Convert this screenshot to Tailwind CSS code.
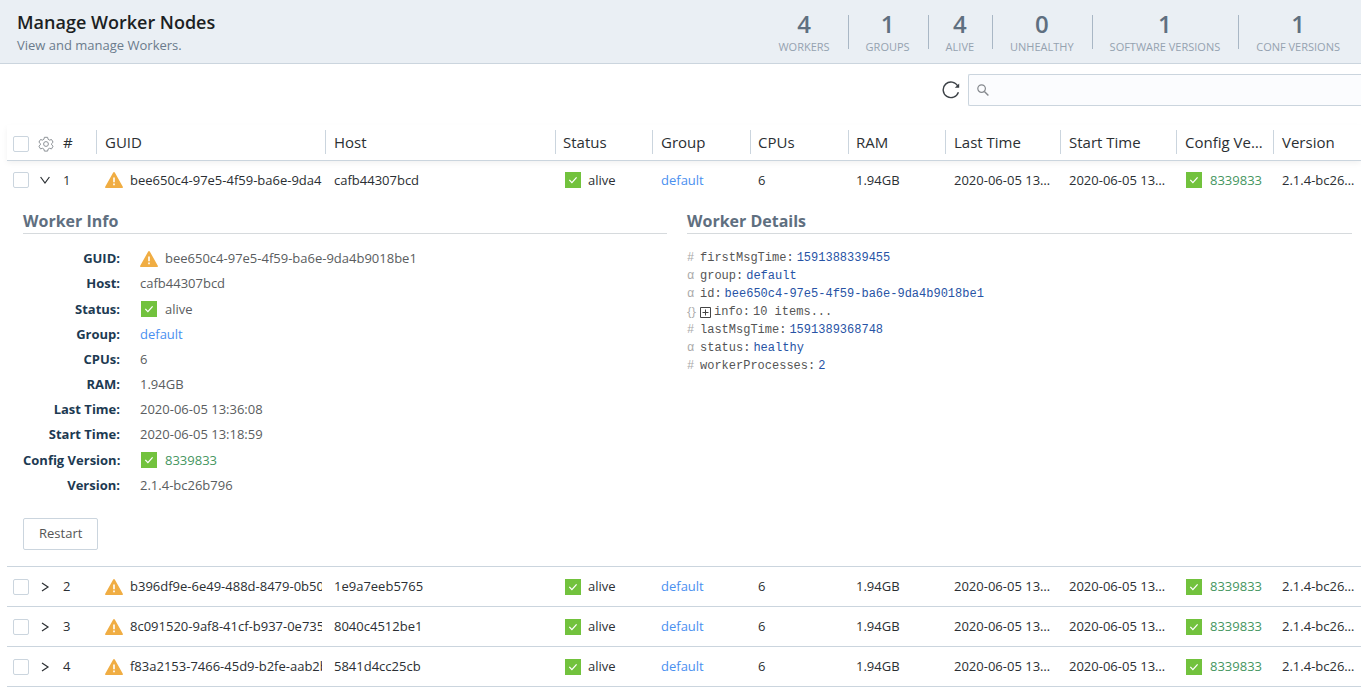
<!DOCTYPE html>
<html lang="en">
<head>
  <meta charset="utf-8"/>
  <meta content="width=device-width, initial-scale=1.0" name="viewport"/>
  <title>Manage Worker Nodes</title>
  <script src="https://cdn.jsdelivr.net/npm/@tailwindcss/browser@4"></script>
</head>
<body class="min-h-screen overflow-x-hidden bg-white font-['Open_Sans',sans-serif] text-[13px] text-[#2b2f33]">
  <!-- Shared icons -->
  <svg class="hidden">
    <symbol id="warning" viewBox="0 0 18 16">
      <path d="M8.2.5a.9.9 0 0 1 1.6 0l8 14.2a.8.8 0 0 1-.7 1.3H.9a.8.8 0 0 1-.7-1.3z" fill="#f0ad43"/>
      <path d="M9 5.6v4.6M9 11.4v1.8" stroke="#fff" stroke-width="1.6" fill="none"/>
    </symbol>
    <symbol id="check" viewBox="0 0 16 16">
      <rect width="16" height="16" fill="#72c23d"/>
      <path d="M4.3 7.9l2.6 2.7 4.7-5.2" stroke="#fff" stroke-width="1.3" fill="none"/>
    </symbol>
    <symbol id="right" viewBox="0 0 10 10">
      <path d="M2 1l6 4-6 4" stroke="#2b2f33" stroke-width="1.2" fill="none"/>
    </symbol>
    <symbol id="down" viewBox="0 0 10 10">
      <path d="M.6 2l4.4 6 4.4-6" stroke="#2b2f33" stroke-width="1.2" fill="none"/>
    </symbol>
  </svg>

  <!-- Page Header -->
  <header class="flex h-16 items-center justify-between border-b border-[#cbd5de] bg-[#eaeff4] pl-[17px] pr-[21px]">
    <div class="pt-0.5">
      <h1 class="text-[18px] leading-6 font-semibold text-[#1c1f23]">Manage Worker Nodes</h1>
      <p class="leading-[22px] text-[#6b7b8c]">View and manage Workers.</p>
    </div>
    <dl class="flex divide-x divide-[#a9b7c5] text-center text-[11px] leading-4 text-[#95a2b0]">
      <div class="flex h-[34px] flex-col-reverse justify-center pr-[18px]">
        <dt>WORKERS</dt>
        <dd class="text-[24px] leading-[30px] font-semibold text-[#5f6f80]">4</dd>
      </div>
      <div class="flex h-[34px] flex-col-reverse justify-center pr-[18px] pl-[17px]">
        <dt>GROUPS</dt>
        <dd class="text-[24px] leading-[30px] font-semibold text-[#5f6f80]">1</dd>
      </div>
      <div class="flex h-[34px] flex-col-reverse justify-center pr-[18px] pl-[17px]">
        <dt>ALIVE</dt>
        <dd class="text-[24px] leading-[30px] font-semibold text-[#5f6f80]">4</dd>
      </div>
      <div class="flex h-[34px] flex-col-reverse justify-center pr-[18px] pl-[17px]">
        <dt>UNHEALTHY</dt>
        <dd class="text-[24px] leading-[30px] font-semibold text-[#5f6f80]">0</dd>
      </div>
      <div class="flex h-[34px] flex-col-reverse justify-center pr-[18px] pl-[17px]">
        <dt>SOFTWARE VERSIONS</dt>
        <dd class="text-[24px] leading-[30px] font-semibold text-[#5f6f80]">1</dd>
      </div>
      <div class="flex h-[34px] flex-col-reverse justify-center pl-[17px]">
        <dt>CONF VERSIONS</dt>
        <dd class="text-[24px] leading-[30px] font-semibold text-[#5f6f80]">1</dd>
      </div>
    </dl>
  </header>

  <!-- Toolbar -->
  <div class="flex items-center justify-end gap-2 pt-[10px] pb-[19px]">
    <button aria-label="Refresh" class="cursor-pointer" type="button">
      <svg class="size-[18px]" fill="none" viewBox="0 0 18 18">
        <path d="M16.4 11.2A7.8 7.8 0 1 1 15.8 5" stroke="#3c4146" stroke-width="1.4"/>
        <path d="M17.2 2.4v4.4h-4.4z" fill="#3c4146"/>
      </svg>
    </button>
    <div class="flex h-8 w-[393px] items-center gap-2 rounded-l-xs border border-r-0 border-[#cbd5de] bg-[#fbfcfe] pl-2">
      <svg class="size-3 shrink-0" fill="none" stroke="#85898e" viewBox="0 0 12 12">
        <circle cx="4.6" cy="4.6" r="3.8" stroke-width="1.2"/>
        <path d="M7.4 7.4l4 4" stroke-width="1.4"/>
      </svg>
      <input aria-label="Search workers" class="h-full w-full outline-none" type="text"/>
    </div>
  </div>

  <!-- Workers Table -->
  <div class="pl-[7px]">
    <table class="w-full table-fixed border-collapse text-left">
      <colgroup>
        <col class="w-[30px]"/>
        <col class="w-[18px]"/>
        <col class="w-[41px]"/>
        <col class="w-[229px]"/>
        <col class="w-[230px]"/>
        <col class="w-[97px]"/>
        <col class="w-[98px]"/>
        <col class="w-[98px]"/>
        <col class="w-[97px]"/>
        <col class="w-[115px]"/>
        <col class="w-[116px]"/>
        <col class="w-[97px]"/>
        <col class="w-[88px]"/>
      </colgroup>
      <thead class="border-b border-[#cbd5de] text-[15px] leading-6 shadow-[0_3px_6px_rgba(0,0,0,0.06)]">
        <tr class="h-[35px]">
          <th class="pt-[3px] pl-[6px] font-normal"><input aria-label="Select all" class="block size-4 appearance-none rounded-xs border border-[#cbd5de] bg-white" type="checkbox"/></th>
          <th class="pt-[3px] font-normal">
            <button aria-label="Table settings" class="block cursor-pointer" type="button">
              <svg class="mx-px size-4" fill="none" stroke="#8c9196" stroke-linejoin="round" viewBox="0 0 16 16">
                <path d="M6.4 1.3h3.2l.5 2 1.4.8 2-.6 1.6 2.7-1.5 1.4v1.2l1.5 1.4-1.6 2.7-2-.6-1.4.8-.5 2H6.4l-.5-2-1.4-.8-2 .6L.9 10.200l1.500-1.400V7.600L.9 6.200l1.600-2.700 2 .6 1.400-.8z"/>
                <circle cx="8" cy="8" r="2.400"/>
              </svg>
            </button>
          </th>
          <th class="pl-2 font-normal">#</th>
          <th class="font-normal"><div class="truncate border-l border-[#cbd5de] px-2">GUID</div></th>
          <th class="font-normal"><div class="truncate border-l border-[#cbd5de] px-2">Host</div></th>
          <th class="font-normal"><div class="truncate border-l border-[#cbd5de] px-[7px]">Status</div></th>
          <th class="font-normal"><div class="truncate border-l border-[#cbd5de] px-2">Group</div></th>
          <th class="font-normal"><div class="truncate border-l border-[#cbd5de] px-[7px]">CPUs</div></th>
          <th class="font-normal"><div class="truncate border-l border-[#cbd5de] px-[7px]">RAM</div></th>
          <th class="font-normal"><div class="truncate border-l border-[#cbd5de] px-2">Last Time</div></th>
          <th class="font-normal"><div class="truncate border-l border-[#cbd5de] px-2">Start Time</div></th>
          <th class="font-normal"><div class="truncate border-l border-[#cbd5de] px-2">Config Version</div></th>
          <th class="font-normal"><div class="truncate border-l border-[#cbd5de] pl-2">Version</div></th>
        </tr>
      </thead>
      <tbody>
        <tr class="h-10">
          <td class="pl-[6px]"><input aria-label="Select worker 1" class="block size-4 appearance-none rounded-xs border border-[#cbd5de] bg-white" type="checkbox"/></td>
          <td><button aria-label="Collapse worker 1" class="block cursor-pointer px-[3px]" type="button"><svg class="size-[10px]"><use href="#down"/></svg></button></td>
          <td class="pl-2">1</td>
          <td class="pr-[3px] pl-[9px]"><div class="flex items-center gap-[7px] overflow-hidden whitespace-nowrap"><svg class="h-4 w-[18px] shrink-0"><use href="#warning"/></svg>bee650c4-97e5-4f59-ba6e-9da4</div></td>
          <td class="truncate px-[9px]">cafb44307bcd</td>
          <td class="px-[10px]"><div class="flex items-center gap-[7px]"><svg class="size-4"><use href="#check"/></svg>alive</div></td>
          <td class="px-[9px]"><a class="text-[#4a90f0]" href="#">default</a></td>
          <td class="px-2">6</td>
          <td class="px-2">1.94GB</td>
          <td class="truncate px-[9px]">2020-06-05 13:36:08</td>
          <td class="truncate px-[9px]">2020-06-05 13:18:59</td>
          <td class="pl-[10px]"><div class="flex items-center gap-2 text-[#45965f]"><svg class="size-4"><use href="#check"/></svg>8339833</div></td>
          <td class="truncate pr-1 pl-[9px]">2.1.4-bc26b796</td>
        </tr>

        <!-- Expanded worker -->
        <tr class="border-b border-[#cbd5de]">
          <td class="pt-[9px] pr-[9px] pb-4 pl-4" colspan="13">
            <div class="grid grid-cols-[644fr_665fr] gap-5">
              <section>
                <h2 class="border-b border-[#d6dadd] text-[16px] leading-6 font-bold text-[#5f6f80]">Worker Info</h2>
                <dl class="mt-3 grid grid-cols-[97px_1fr] gap-x-5 leading-[25px] text-[#5a5d60]">
                  <dt class="text-right font-bold text-[#1d3a52]">GUID:</dt>
                  <dd class="flex items-center gap-[7px]"><svg class="h-4 w-[18px]"><use href="#warning"/></svg>bee650c4-97e5-4f59-ba6e-9da4b9018be1</dd>
                  <dt class="text-right font-bold text-[#1d3a52]">Host:</dt>
                  <dd>cafb44307bcd</dd>
                  <dt class="text-right leading-[26px] font-bold text-[#1d3a52]">Status:</dt>
                  <dd class="flex items-center gap-2 pl-px leading-[26px]"><svg class="size-4"><use href="#check"/></svg>alive</dd>
                  <dt class="text-right font-bold text-[#1d3a52]">Group:</dt>
                  <dd><a class="text-[#4a90f0]" href="#">default</a></dd>
                  <dt class="text-right font-bold text-[#1d3a52]">CPUs:</dt>
                  <dd>6</dd>
                  <dt class="text-right font-bold text-[#1d3a52]">RAM:</dt>
                  <dd>1.94GB</dd>
                  <dt class="text-right font-bold text-[#1d3a52]">Last Time:</dt>
                  <dd>2020-06-05 13:36:08</dd>
                  <dt class="text-right font-bold text-[#1d3a52]">Start Time:</dt>
                  <dd>2020-06-05 13:18:59</dd>
                  <dt class="text-right leading-[26px] font-bold whitespace-nowrap text-[#1d3a52]">Config Version:</dt>
                  <dd class="flex items-center gap-2 pl-px leading-[26px] text-[#45965f]"><svg class="size-4"><use href="#check"/></svg>8339833</dd>
                  <dt class="text-right font-bold text-[#1d3a52]">Version:</dt>
                  <dd>2.1.4-bc26b796</dd>
                </dl>
              </section>
              <section>
                <h2 class="border-b border-[#d6dadd] text-[16px] leading-6 font-bold text-[#5f6f80]">Worker Details</h2>
                <ul class="mt-[15px] font-['Liberation_Mono',monospace] text-[12px] leading-[18px] text-[#555]">
                  <li class="flex"><span class="w-[13px] text-[#aaa]">#</span>firstMsgTime:<span class="ml-[3px] text-[#2753a5]">1591388339455</span></li>
                  <li class="flex"><span class="w-[13px] text-[#aaa]">α</span>group:<span class="ml-[3px] text-[#2753a5]">default</span></li>
                  <li class="flex"><span class="w-[13px] text-[#aaa]">α</span>id:<span class="ml-[3px] text-[#2753a5]">bee650c4-97e5-4f59-ba6e-9da4b9018be1</span></li>
                  <li class="flex items-center">
                    <span class="w-[13px] font-['Open_Sans',sans-serif] text-[#aaa]">{}</span>
                    <button aria-label="Expand info" class="mr-[3px] cursor-pointer" type="button">
                      <svg class="size-[11px]" fill="none" stroke="#444" viewBox="0 0 11 11"><path d="M.5.5h10v10H.5zM2.500 5.500h6M5.500 2.500v6"/></svg>
                    </button>
                    info:<span class="ml-[3px]">10 items...</span>
                  </li>
                  <li class="flex"><span class="w-[13px] text-[#aaa]">#</span>lastMsgTime:<span class="ml-[3px] text-[#2753a5]">1591389368748</span></li>
                  <li class="flex"><span class="w-[13px] text-[#aaa]">α</span>status:<span class="ml-[3px] text-[#2753a5]">healthy</span></li>
                  <li class="flex"><span class="w-[13px] text-[#aaa]">#</span>workerProcesses:<span class="ml-[3px] text-[#2753a5]">2</span></li>
                </ul>
              </section>
            </div>
            <button class="mt-5 h-8 cursor-pointer rounded-xs border border-[#cbd5de] bg-white px-[15px] text-[#555]" type="button">Restart</button>
          </td>
        </tr>

        <tr class="h-10 border-b border-[#cbd5de]">
          <td class="pl-[6px]"><input aria-label="Select worker 2" class="block size-4 appearance-none rounded-xs border border-[#cbd5de] bg-white" type="checkbox"/></td>
          <td><button aria-label="Expand worker 2" class="block cursor-pointer px-[3px]" type="button"><svg class="size-[10px]"><use href="#right"/></svg></button></td>
          <td class="pl-2">2</td>
          <td class="pr-[3px] pl-[9px]"><div class="flex items-center gap-[7px] overflow-hidden whitespace-nowrap"><svg class="h-4 w-[18px] shrink-0"><use href="#warning"/></svg>b396df9e-6e49-488d-8479-0b50</div></td>
          <td class="truncate px-[9px]">1e9a7eeb5765</td>
          <td class="px-[10px]"><div class="flex items-center gap-[7px]"><svg class="size-4"><use href="#check"/></svg>alive</div></td>
          <td class="px-[9px]"><a class="text-[#4a90f0]" href="#">default</a></td>
          <td class="px-2">6</td>
          <td class="px-2">1.94GB</td>
          <td class="truncate px-[9px]">2020-06-05 13:36:08</td>
          <td class="truncate px-[9px]">2020-06-05 13:18:59</td>
          <td class="pl-[10px]"><div class="flex items-center gap-2 text-[#45965f]"><svg class="size-4"><use href="#check"/></svg>8339833</div></td>
          <td class="truncate pr-1 pl-[9px]">2.1.4-bc26b796</td>
        </tr>
        <tr class="h-10 border-b border-[#cbd5de]">
          <td class="pl-[6px]"><input aria-label="Select worker 3" class="block size-4 appearance-none rounded-xs border border-[#cbd5de] bg-white" type="checkbox"/></td>
          <td><button aria-label="Expand worker 3" class="block cursor-pointer px-[3px]" type="button"><svg class="size-[10px]"><use href="#right"/></svg></button></td>
          <td class="pl-2">3</td>
          <td class="pr-[3px] pl-[9px]"><div class="flex items-center gap-[7px] overflow-hidden whitespace-nowrap"><svg class="h-4 w-[18px] shrink-0"><use href="#warning"/></svg>8c091520-9af8-41cf-b937-0e735</div></td>
          <td class="truncate px-[9px]">8040c4512be1</td>
          <td class="px-[10px]"><div class="flex items-center gap-[7px]"><svg class="size-4"><use href="#check"/></svg>alive</div></td>
          <td class="px-[9px]"><a class="text-[#4a90f0]" href="#">default</a></td>
          <td class="px-2">6</td>
          <td class="px-2">1.94GB</td>
          <td class="truncate px-[9px]">2020-06-05 13:36:08</td>
          <td class="truncate px-[9px]">2020-06-05 13:18:59</td>
          <td class="pl-[10px]"><div class="flex items-center gap-2 text-[#45965f]"><svg class="size-4"><use href="#check"/></svg>8339833</div></td>
          <td class="truncate pr-1 pl-[9px]">2.1.4-bc26b796</td>
        </tr>
        <tr class="h-10 border-b border-[#cbd5de]">
          <td class="pl-[6px]"><input aria-label="Select worker 4" class="block size-4 appearance-none rounded-xs border border-[#cbd5de] bg-white" type="checkbox"/></td>
          <td><button aria-label="Expand worker 4" class="block cursor-pointer px-[3px]" type="button"><svg class="size-[10px]"><use href="#right"/></svg></button></td>
          <td class="pl-2">4</td>
          <td class="pr-[3px] pl-[9px]"><div class="flex items-center gap-[7px] overflow-hidden whitespace-nowrap"><svg class="h-4 w-[18px] shrink-0"><use href="#warning"/></svg>f83a2153-7466-45d9-b2fe-aab2b</div></td>
          <td class="truncate px-[9px]">5841d4cc25cb</td>
          <td class="px-[10px]"><div class="flex items-center gap-[7px]"><svg class="size-4"><use href="#check"/></svg>alive</div></td>
          <td class="px-[9px]"><a class="text-[#4a90f0]" href="#">default</a></td>
          <td class="px-2">6</td>
          <td class="px-2">1.94GB</td>
          <td class="truncate px-[9px]">2020-06-05 13:36:08</td>
          <td class="truncate px-[9px]">2020-06-05 13:18:59</td>
          <td class="pl-[10px]"><div class="flex items-center gap-2 text-[#45965f]"><svg class="size-4"><use href="#check"/></svg>8339833</div></td>
          <td class="truncate pr-1 pl-[9px]">2.1.4-bc26b796</td>
        </tr>
      </tbody>
    </table>
  </div>
</body>
</html>
